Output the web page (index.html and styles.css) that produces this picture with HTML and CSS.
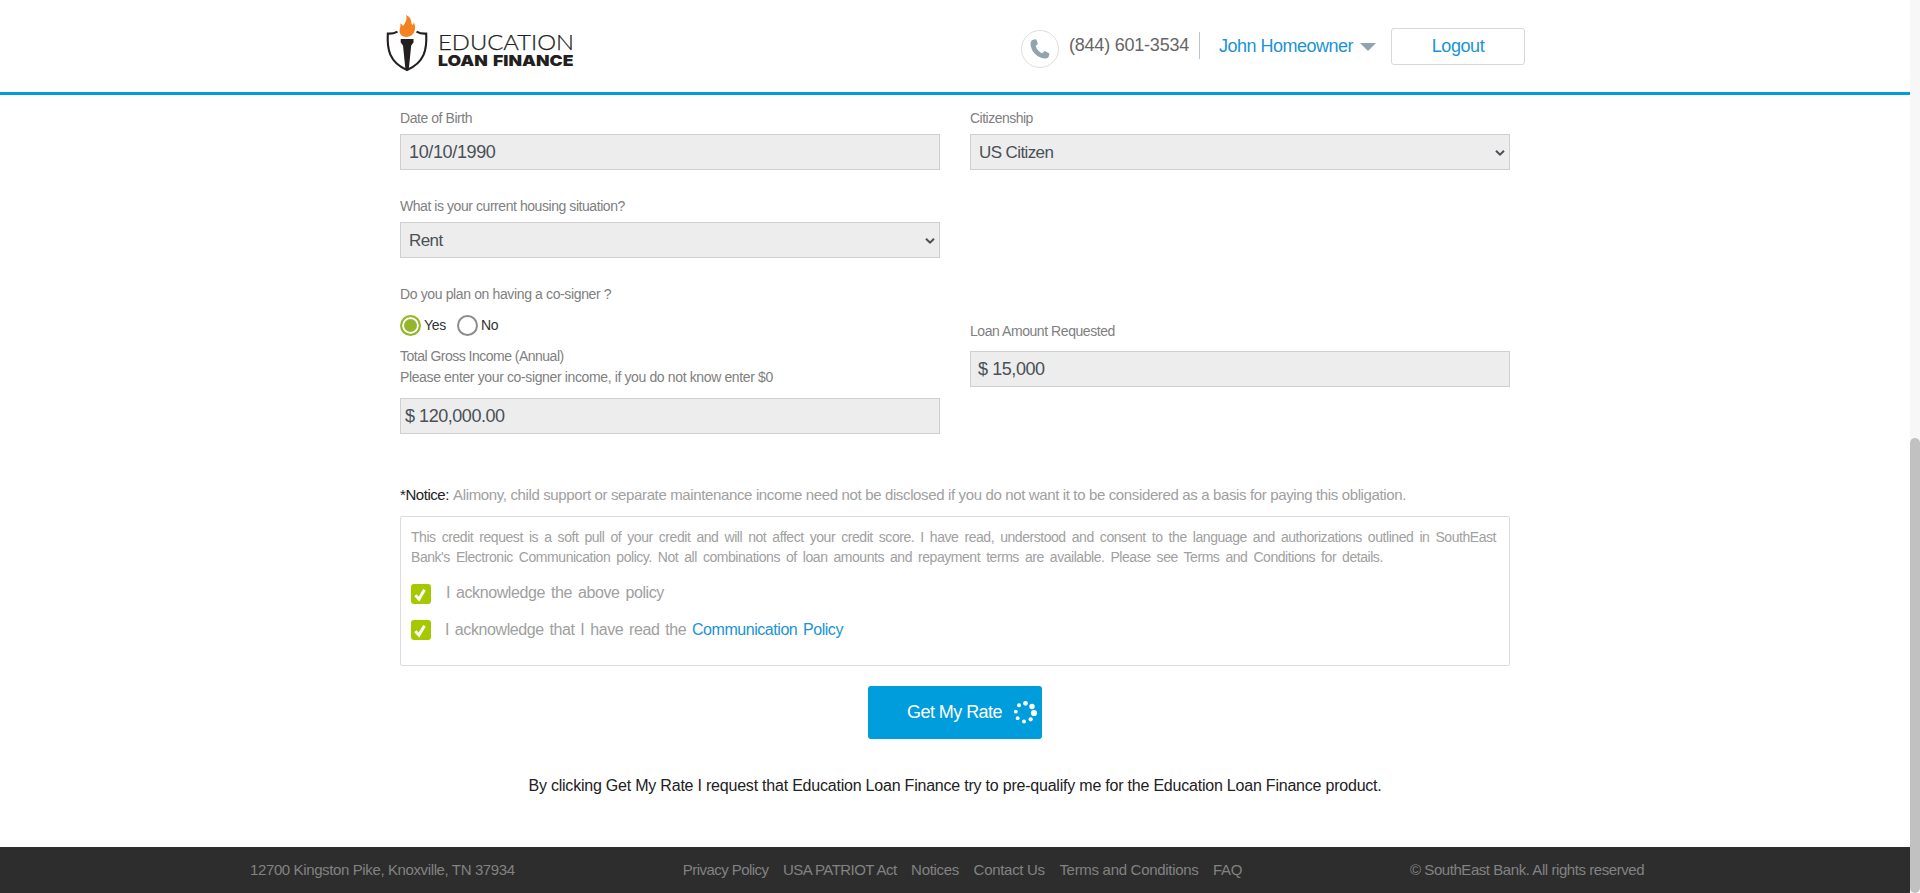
FILE: index.html
```html
<!DOCTYPE html>
<html lang="en">
<head>
<meta charset="utf-8">
<title>Education Loan Finance</title>
<link rel="stylesheet" href="styles.css">
</head>
<body>
<div class="page">
  <header class="header">
    <svg class="logo" width="190" height="62" viewBox="0 0 190 62" role="img" aria-label="Education Loan Finance">
      <path d="M12.5 16.6 Q8 19 2.8 18.6 C2 34 4 47 22 55 C40 47 42 34 41.2 18.6 Q36 19 31.5 16.6" fill="none" stroke="#231f20" stroke-width="2.1"/>
      <path d="M21 0 C28 3 25 7.5 27.5 10 Q29 9.500 28.600 7 C31.500 12 30.500 21 22 22 C15.500 22 13.500 17.500 15 13 Q15.800 10.500 15.300 8.500 Q17.500 9.300 18 11 C20.500 8 22.500 4 21 0Z" fill="#f58220"/>
      <path d="M15.700 24 H28.500 V27.500 L26.200 30.500 L23.900 53 L22.100 55 L20.300 53 L18 30.500 L15.700 27.500Z" fill="#231f20"/>
      <text class="logo-light" x="53" y="35.3" textLength="136" lengthAdjust="spacingAndGlyphs">EDUCATION</text>
      <text class="logo-bold" x="53" y="50.6" textLength="135.5" lengthAdjust="spacingAndGlyphs">LOAN FINANCE</text>
    </svg>
    <div class="account">
      <span class="phone-badge">
        <svg width="20" height="20" viewBox="0 0 20 20"><path d="M3.2 .7 L5.2 .2 Q6 0 6.4 .8 L7.7 4.3 Q7.9 5 7.3 5.5 L5.6 6.9 C6.8 10.3 9.2 12.9 12.4 14.3 L14 12.5 Q14.5 12 15.2 12.3 L18.6 13.9 Q19.7 14.5 19.4 15.3 L18.8 17.5 Q18.2 19.5 15.6 19.6 C8 19.7 .8 12.5 .5 5 Q.5 1.6 3.2 .7Z" fill="#90a4ae"/></svg>
      </span>
      <span class="phone">(844) 601-3534</span>
      <span class="divider"></span>
      <a class="user">John Homeowner</a>
      <span class="caret"></span>
      <a class="logout">Logout</a>
    </div>
  </header>

  <main class="form">
    <div class="columns">
      <div class="column">
        <div class="field">
          <label class="label">Date of Birth</label>
          <div class="control date">10/10/1990</div>
        </div>
        <div class="field">
          <label class="label">What is your current housing situation?</label>
          <div class="control select">Rent
            <svg class="chevron" width="10" height="8" viewBox="0 0 10 8"><path d="M1 1.7 L5 5.7 L9 1.7" fill="none" stroke="#495057" stroke-width="2"/></svg>
          </div>
        </div>
        <div class="cosigner">
          <label class="label loose">Do you plan on having a co-signer ?</label>
          <div class="radios">
            <span class="radio checked"></span><span class="radio-text">Yes</span>
            <span class="radio"></span><span class="radio-text">No</span>
          </div>
          <label class="label income tight">Total Gross Income (Annual)</label>
          <label class="label income loose">Please enter your co-signer income, if you do not know enter $0</label>
          <div class="control income-value">$ 120,000.00</div>
        </div>
      </div>
      <div class="column">
        <div class="field">
          <label class="label tight">Citizenship</label>
          <div class="control select">US Citizen
            <svg class="chevron" width="10" height="8" viewBox="0 0 10 8"><path d="M1 1.7 L5 5.7 L9 1.7" fill="none" stroke="#495057" stroke-width="2"/></svg>
          </div>
        </div>
        <div class="loan">
          <label class="label">Loan Amount Requested</label>
          <div class="control loan-value">$ 15,000</div>
        </div>
      </div>
    </div>

    <p class="notice"><span class="notice-title">*Notice:</span> <span class="notice-body">Alimony, child support or separate maintenance income need not be disclosed if you do not want it to be considered as a basis for paying this obligation.</span></p>

    <section class="policy">
      <p class="policy-text">This credit request is a soft pull of your credit and will not affect your credit score. I have read, understood and consent to the language and authorizations outlined in SouthEast Bank's Electronic Communication policy. Not all combinations of loan amounts and repayment terms are available. Please see Terms and Conditions for details.</p>
      <div class="ack">
        <span class="checkbox"><svg width="20" height="20" viewBox="0 0 20 20"><path d="M4.300 11.300 L8 15 L13.500 5.800" fill="none" stroke="#fff" stroke-width="3"/></svg></span>
        <span>I acknowledge the above policy</span>
      </div>
      <div class="ack second">
        <span class="checkbox"><svg width="20" height="20" viewBox="0 0 20 20"><path d="M4.300 11.300 L8 15 L13.500 5.800" fill="none" stroke="#fff" stroke-width="3"/></svg></span>
        <span>I acknowledge that I have read the <a class="link">Communication Policy</a></span>
      </div>
    </section>

    <button class="submit" type="button">
      <span>Get My Rate</span>
      <svg class="spinner" width="25" height="25" viewBox="0 0 25 25" fill="#fff">
        <circle cx="12.5" cy="3.3" r="2.4"/><circle cx="19" cy="6.5" r="2.7"/><circle cx="21" cy="13" r="3.1"/><circle cx="17.7" cy="19.3" r="2.1"/><circle cx="11" cy="21.5" r="2"/><circle cx="4.7" cy="18.2" r="1.9"/><circle cx="2.8" cy="11.7" r="1.9"/><circle cx="6" cy="5.2" r="2"/>
      </svg>
    </button>

    <p class="disclaimer">By clicking Get My Rate I request that Education Loan Finance try to pre-qualify me for the Education Loan Finance product.</p>
  </main>

  <footer class="footer">
    <span class="address">12700 Kingston Pike, Knoxville, TN 37934</span>
    <nav class="links">
      <a class="narrow">Privacy Policy</a><a class="narrow">USA PATRIOT Act</a><a>Notices</a><a>Contact Us</a><a>Terms and Conditions</a><a>FAQ</a>
    </nav>
    <span class="copyright">© SouthEast Bank. All rights reserved</span>
  </footer>
</div>
<div class="scrollbar"><div class="thumb"></div></div>
</body>
</html>
```

FILE: styles.css
```css
* { box-sizing: border-box; }

body {
  margin: 0;
  display: flex;
  height: 893px;
  overflow: hidden;
  background: #fff;
  font-family: "Liberation Sans", Arial, sans-serif;
}

p { margin: 0; }

.page {
  width: 1910px;
  height: 893px;
  display: flex;
  flex-direction: column;
}

.header {
  height: 95px;
  border-bottom: 3px solid #009ddc;
  padding: 15px 385px 0;
  display: flex;
  justify-content: space-between;
  align-items: flex-start;
  flex: none;
}

.logo-light { font: 300 20.6px Lato, sans-serif; fill: #231f20; stroke: #231f20; stroke-width: 0.25px; }
.logo-bold { font: 900 15.2px Inter, sans-serif; word-spacing: 1.5px; fill: #231f20; }

.account { display: flex; align-items: flex-start; line-height: 20px; font-size: 18px; white-space: nowrap; }

.phone-badge {
  width: 38px;
  height: 38px;
  margin-top: 14.5px;
  border: 1px solid #dedede;
  border-radius: 50%;
  display: flex;
  align-items: center;
  justify-content: center;
}

.phone { width: 120px; margin: 20px 0 0 10px; letter-spacing: -0.22px; color: #666; }
.divider { width: 1px; height: 27px; margin: 17px 0 0 10px; background: #b8c5ca; }
.user { width: 134px; margin: 21px 0 0 19px; letter-spacing: -0.5px; color: #1b93d6; }

.caret {
  margin: 28px 15px 0 7px;
  border: 8px solid transparent;
  border-top-color: #90a4ae;
  border-bottom: 0;
}

.logout {
  width: 134px;
  height: 37px;
  margin-top: 13px;
  border: 1px solid #d6d8da;
  border-radius: 3px;
  text-align: center;
  line-height: 35px;
  letter-spacing: -0.43px;
  color: #1b93d6;
}

.form {
  width: 1110px;
  margin: 0 auto;
  padding-top: 13px;
  flex: 1;
  display: flex;
  flex-direction: column;
}

.columns { display: grid; grid-template-columns: 540px 540px; gap: 30px; }
.column { display: flex; flex-direction: column; }
.field { display: flex; flex-direction: column; gap: 6px; margin-bottom: 26px; }

.label { display: block; font-size: 14px; line-height: 20px; letter-spacing: -0.44px; color: #808080; }
.label.tight { letter-spacing: -0.51px; }
.label.loose { letter-spacing: -0.37px; }
.label.income { line-height: 21px; }

.control {
  display: flex;
  align-items: center;
  justify-content: space-between;
  height: 36px;
  border: 1px solid #cfcfcf;
  background: #ededed;
  padding: 0 4px 0 8px;
  font-size: 18px;
  letter-spacing: -0.42px;
  color: #495057;
}
.control.date { letter-spacing: -0.36px; }
.control.select { padding-top: 1px; font-size: 17px; letter-spacing: -0.6px; }
.income-value { margin-top: 10px; padding-left: 4px; letter-spacing: -0.46px; }
.loan-value { margin-top: 10px; padding-left: 7px; }
.loan { margin-top: 125px; }

.radios { display: flex; align-items: center; height: 21px; margin: 11px 0 10px; }
.radio { width: 21px; height: 21px; flex: none; border: 2px solid #8c8c8c; border-radius: 50%; }
.radio.checked { border-color: #95b62b; background: #95b62b; box-shadow: inset 0 0 0 2px #fff; }
.radio-text { margin: 0 11px 0 3px; padding-bottom: 2px; font-size: 14px; letter-spacing: -0.3px; color: #333; }

.notice { margin-top: 51px; font-size: 15px; line-height: 20px; white-space: nowrap; }
.notice-title { letter-spacing: -0.45px; color: #222; }
.notice-body { letter-spacing: -0.364px; color: #a0a0a0; }

.policy {
  height: 150px;
  margin-top: 11px;
  border: 1px solid #dcdcdc;
  border-radius: 2px;
  padding: 10px 13px 0 10px;
  color: #a0a0a0;
}
.policy-text { font-size: 14px; line-height: 20px; letter-spacing: -0.45px; word-spacing: 2.57px; text-align: justify; }
.ack { display: flex; gap: 15px; height: 20px; margin-top: 17px; font-size: 16px; line-height: 18px; letter-spacing: -0.4px; word-spacing: 1.9px; }
.ack.second { gap: 14px; margin-top: 16px; line-height: 20px; word-spacing: 1.7px; }
.checkbox { width: 20px; height: 20px; border-radius: 3px; background: #a4c900; flex: none; }
.checkbox svg { display: block; }
.link { color: #1b93d6; letter-spacing: -0.45px; }

.submit {
  width: 174px;
  height: 53px;
  margin: 20px auto 0;
  border: 0;
  border-radius: 3px;
  background: #009ddc;
  padding: 0 4px 0 39px;
  display: flex;
  align-items: center;
  justify-content: space-between;
  font: 18px "Liberation Sans", Arial, sans-serif;
  letter-spacing: -0.55px;
  color: #fff;
}

.disclaimer { margin-top: 37px; text-align: center; font-size: 16px; line-height: 20px; letter-spacing: -0.215px; color: #222; white-space: nowrap; }

.footer {
  height: 46px;
  flex: none;
  background: #2d2d2d;
  padding: 0 265px 2px 250px;
  display: flex;
  align-items: center;
  justify-content: space-between;
  font-size: 15px;
  letter-spacing: -0.3px;
  color: #828282;
  white-space: nowrap;
}
.address { width: 265px; letter-spacing: -0.38px; }
.links { display: flex; gap: 14.6px; }
.links .narrow { letter-spacing: -0.55px; }
.copyright { width: 235px; letter-spacing: -0.44px; }

.scrollbar { width: 10px; height: 893px; background: #f7f7f7; padding-top: 438px; }
.thumb { height: 455px; border-radius: 5px; background: #c1c1c1; }
```
